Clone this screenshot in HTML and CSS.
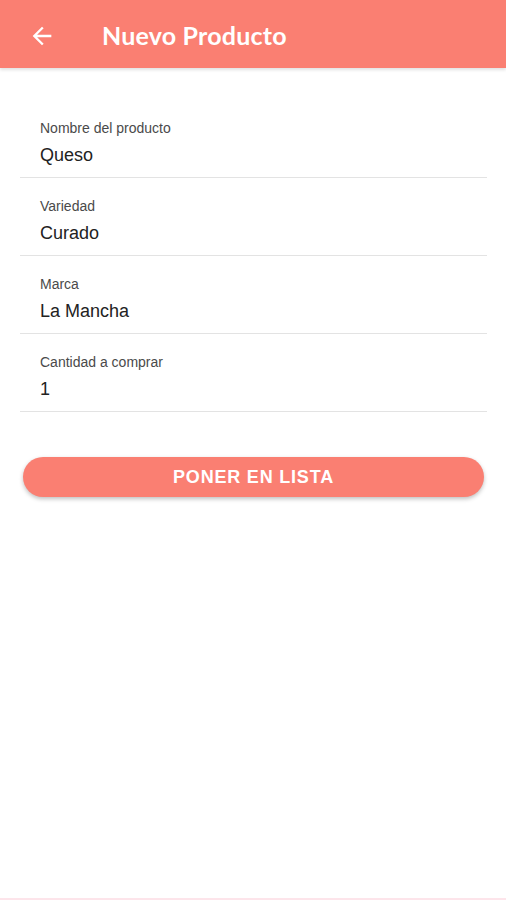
FILE: index.html
```html
<!DOCTYPE html>
<html lang="es">
<head>
    <meta charset="UTF-8">
    <meta name="viewport" content="width=device-width, initial-scale=1.0">
    <title>Nuevo Producto</title>
    <link rel="stylesheet" href="styles.css">
</head>
<body>
    <header class="app-bar">
        <button class="back-btn" type="button" aria-label="Volver">
            <svg width="28" height="28" viewBox="0 0 24 24">
                <path d="M20 11H7.83l5.59-5.59L12 4l-8 8 8 8 1.41-1.41L7.83 13H20v-2z" fill="#fff"/>
            </svg>
        </button>
        <h1 class="app-title">Nuevo Producto</h1>
    </header>

    <form class="product-form">
        <div class="field">
            <label for="nombre">Nombre del producto</label>
            <input type="text" id="nombre" value="Queso">
        </div>
        <div class="field">
            <label for="variedad">Variedad</label>
            <input type="text" id="variedad" value="Curado">
        </div>
        <div class="field">
            <label for="marca">Marca</label>
            <input type="text" id="marca" value="La Mancha">
        </div>
        <div class="field">
            <label for="cantidad">Cantidad a comprar</label>
            <input type="text" id="cantidad" value="1">
        </div>

        <button class="submit-btn" type="submit">PONER EN LISTA</button>
    </form>

    <div class="bottom-line"></div>
</body>
</html>
```

FILE: styles.css
```css
body {
    margin: 0;
    padding: 0;
    background-color: #fff;
    font-family: "Liberation Sans", Arial, sans-serif;
    min-height: 900px;
    display: flex;
    flex-direction: column;
}
.app-bar {
    height: 68px;
    background-color: #fa7f72;
    display: flex;
    align-items: center;
    box-shadow: 0 2px 3px rgba(0, 0, 0, 0.12);
}
.back-btn {
    background: none;
    border: none;
    padding: 0;
    margin-left: 28px;
    width: 28px;
    height: 28px;
    display: flex;
    margin-top: 4px;
}
.app-title {
    margin: 2px 0 0 46px;
    color: #fff;
    font-family: Lato, sans-serif;
    font-weight: 700;
    font-size: 25px;
    letter-spacing: 0.2px;
}
.product-form {
    padding: 32px 19px 0 20px;
    display: flex;
    flex-direction: column;
}
.field {
    padding: 20px 0 11px 20px;
    border-bottom: 1px solid #e3e3e3;
    display: flex;
    flex-direction: column;
}
.field label {
    font-size: 14px;
    line-height: 16px;
    color: #4a4a4a;
}
.field input {
    margin-top: 8px;
    border: none;
    padding: 0;
    font-family: "Liberation Sans", Arial, sans-serif;
    font-size: 18px;
    line-height: 22px;
    height: 22px;
    color: #222;
    outline: none;
}
.submit-btn {
    margin: 45px 3px 0 3px;
    height: 40px;
    border: none;
    border-radius: 20px;
    background-color: #fa7f72;
    color: #fff;
    font-family: "Liberation Sans", Arial, sans-serif;
    font-weight: 700;
    font-size: 18px;
    letter-spacing: 0.8px;
    box-shadow: 0 2px 4px rgba(0, 0, 0, 0.25);
}
.bottom-line {
    margin-top: auto;
    height: 2px;
    background-color: #fde4ea;
}
```
